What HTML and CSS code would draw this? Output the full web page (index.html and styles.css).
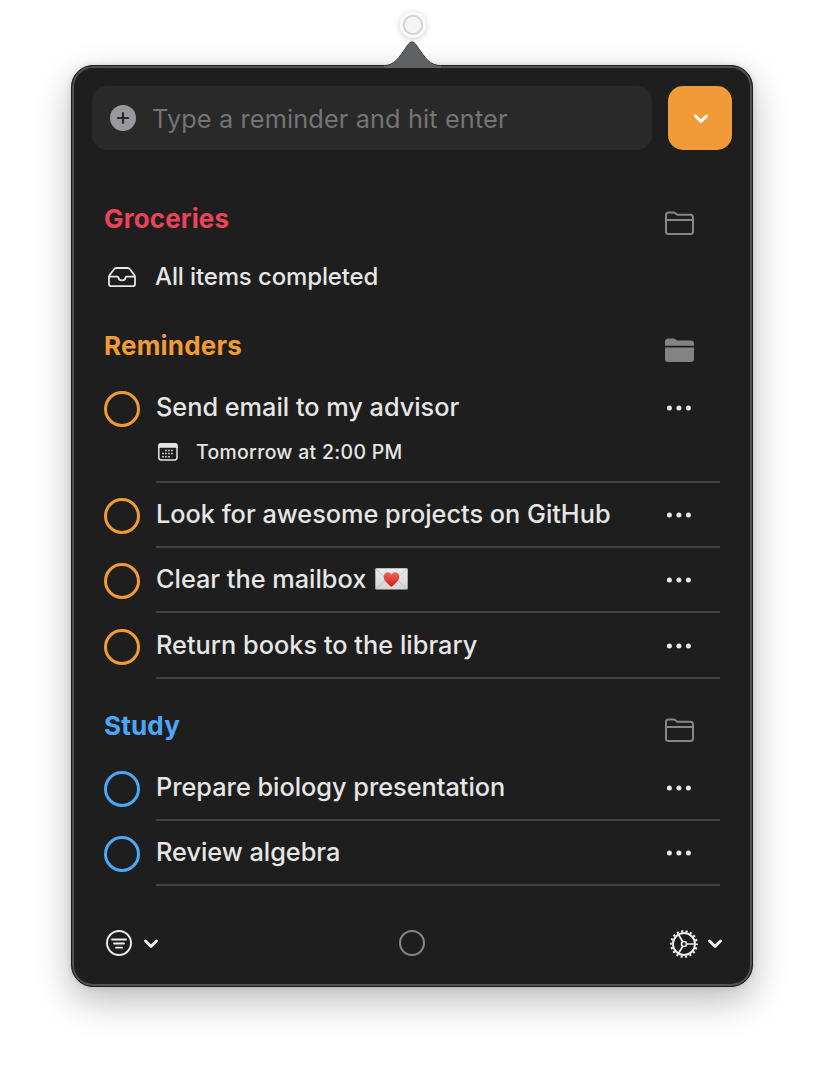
FILE: index.html
```
<!DOCTYPE html>
<html lang="en">
<head>
<meta charset="utf-8">
<title>Reminders</title>
<link rel="stylesheet" href="styles.css">
</head>
<body>
<svg width="0" height="0" class="defs">
  <symbol id="folder" viewBox="0 0 30 26"><path d="M1 21.7V5Q1 2.5 3.5 2.5H8.2Q9.5 2.5 10.3 3.3L11.2 4.1Q12 4.8 13 4.8H25.5Q28 4.8 28 7.3V21.5Q28 24 25.5 24H3.5Q1 24 1 21.7ZM1 10H28" fill="none" stroke="#878787" stroke-width="2"/></symbol>
  <symbol id="folder-fill" viewBox="0 0 30 26"><path d="M0 8.8V4.8Q0 1.4 3.4 1.4H8Q9.6 1.4 10.6 2.3L11.4 2.9Q12.2 3.6 13.4 3.6H25.8Q29 3.6 29 6.8V8.8ZM0 10.4H29V21.7Q29 25 25.8 25H3.2Q0 25 0 21.7Z" fill="#838383"/></symbol>
  <symbol id="dots" viewBox="0 0 26 6"><g fill="#e9e9e9"><circle cx="3.4" cy="3" r="2.5"/><circle cx="12.9" cy="3" r="2.5"/><circle cx="22.4" cy="3" r="2.5"/></g></symbol>
  <symbol id="chevron" viewBox="0 0 16 12"><path d="M2.5 3L8 8.4L13.5 3" fill="none" stroke="currentColor" stroke-width="2.9" stroke-linecap="round" stroke-linejoin="round"/></symbol>
</svg>

<main class="popover">
  <svg class="arrow" width="82" height="56" viewBox="0 0 82 56">
    <defs>
      <filter id="glow" x="-50%" y="-50%" width="200%" height="200%"><feDropShadow dx="0" dy="1" stdDeviation="3" flood-opacity=".22"/></filter>
    </defs>
    <circle cx="42" cy="14" r="12.8" fill="#fbfbfb" filter="url(#glow)"/>
    <circle cx="42" cy="14" r="9.2" fill="#f5f5f5" stroke="#d3d3d3" stroke-width="2"/>
    <path d="M13 57V54.6C23 54.6 28 48 36.5 34.5C39.5 29.8 42.5 29.8 45.5 34.5C54 48 59 54.6 70 54.6V57Z" fill="#606162"/>
    <path d="M13 54.6C23 54.6 28 47 36.5 34.3C39.5 29.8 42.5 29.8 45.5 34.3C54 47 59 54.6 70 54.6" fill="none" stroke="#333" stroke-width="1"/>
  </svg>

  <div class="compose">
    <div class="field">
      <svg width="26" height="26" viewBox="0 0 26 26"><circle cx="13" cy="13" r="13" fill="#98989d"/><path d="M13 8V18M8 13H18" stroke="#29292a" stroke-width="2.2" stroke-linecap="round"/></svg>
      <span class="placeholder">Type a reminder and hit enter</span>
    </div>
    <div class="pick"><svg width="16" height="12"><use href="#chevron"/></svg></div>
  </div>

  <section class="list red">
    <header><h2 class="t-groceries">Groceries</h2><svg width="30" height="26"><use href="#folder"/></svg></header>
    <div class="empty">
      <svg width="28" height="22" viewBox="0 0 28 22"><path d="M1 11V18Q1 20.2 3.2 20.2H24.8Q27 20.2 27 18V11Q27 10 26.3 9L22 3.3Q21.1 2 19.6 2H8.4Q6.9 2 6 3.3L1.7 9Q1 10 1 11ZM1.3 10.6H9.2Q10.4 10.6 10.4 11.6Q10.8 14.4 14 14.4Q17.2 14.4 17.6 11.6Q17.6 10.6 18.8 10.6H26.7" fill="none" stroke="#e6e6e6" stroke-width="1.8"/></svg>
      <span>All items completed</span>
    </div>
  </section>

  <section class="list orange">
    <header><h2>Reminders</h2><svg width="30" height="26"><use href="#folder-fill"/></svg></header>
    <div class="item dated"><i class="check"></i><div class="body">
      <div class="line"><span>Send email to my advisor</span><svg width="26" height="6"><use href="#dots"/></svg></div>
      <div class="date">
        <svg width="20" height="18" viewBox="0 0 20 18"><rect x=".8" y=".8" width="18.2" height="16.2" rx="2.4" fill="none" stroke="#e6e6e6" stroke-width="1.5"/><path d="M.4 4.8V3Q.4 .2 3 .2H17Q19.6 .2 19.6 3V4.8Z" fill="#e6e6e6"/><path d="M7.2 7.5H16M4.2 10.6H16M4.2 13.7H13" stroke="#e6e6e6" stroke-width="1.5" stroke-dasharray="1.5 1.5"/></svg>
        <span>Tomorrow at 2:00 PM</span>
      </div></div></div>
    <div class="item"><i class="check"></i><div class="body"><div class="line"><span>Look for awesome projects on GitHub</span><svg width="26" height="6"><use href="#dots"/></svg></div></div></div>
    <div class="item"><i class="check"></i><div class="body"><div class="line"><span>Clear the mailbox</span>
      <svg class="letter" width="33" height="22" viewBox="0 0 33 22"><defs><linearGradient id="paper" x2="0" y2="1"><stop stop-color="#ececec"/><stop offset="1" stop-color="#d4d4d4"/></linearGradient><linearGradient id="heart" x2="0" y2="1"><stop stop-color="#f4655c"/><stop offset="1" stop-color="#c9201f"/></linearGradient></defs><rect x=".3" y=".3" width="32.4" height="21.2" rx=".8" fill="url(#paper)"/><path d="M1 1L14 13Q16.5 15 19 13L32 1M1 21L12 11M32 21L21 11" fill="none" stroke="#b5b9b9" stroke-width=".8"/><path d="M16.5 18.8C12.5 15.8 8.7 12.3 8.7 8.7C8.7 3.8 14.4 2.8 16.5 6.6C18.6 2.8 24.3 3.8 24.3 8.7C24.3 12.3 20.5 15.8 16.5 18.8Z" fill="url(#heart)"/></svg>
      <svg width="26" height="6"><use href="#dots"/></svg></div></div></div>
    <div class="item tall"><i class="check"></i><div class="body"><div class="line"><span class="t-return">Return books to the library</span><svg width="26" height="6"><use href="#dots"/></svg></div></div></div>
  </section>

  <section class="list blue">
    <header><h2>Study</h2><svg width="30" height="26"><use href="#folder"/></svg></header>
    <div class="item"><i class="check"></i><div class="body"><div class="line"><span>Prepare biology presentation</span><svg width="26" height="6"><use href="#dots"/></svg></div></div></div>
    <div class="item"><i class="check"></i><div class="body"><div class="line"><span>Review algebra</span><svg width="26" height="6"><use href="#dots"/></svg></div></div></div>
  </section>

  <footer>
    <div class="tool filter">
      <svg width="26" height="26" viewBox="0 0 26 26" fill="none" stroke="#ececec" stroke-linecap="round"><circle cx="13" cy="13" r="12" stroke-width="1.9"/><path d="M6 9.5H20M8 13.5H18M10 17.7H16" stroke-width="1.8"/></svg>
      <svg width="16" height="12"><use href="#chevron"/></svg>
    </div>
    <svg width="26" height="26" viewBox="0 0 26 26"><circle cx="13" cy="13" r="12" fill="none" stroke="#868686" stroke-width="2"/></svg>
    <div class="tool settings">
      <svg width="28" height="28" viewBox="0 0 28 28" fill="none" stroke="#ececec"><circle cx="14" cy="14" r="12.8" stroke-width="2.2" stroke-dasharray="2.1 2.368" stroke-dashoffset="1.05"/><circle cx="14" cy="14" r="11" stroke-width="1.9"/><circle cx="14" cy="14" r="2.5" stroke-width="1.6"/><path d="M16.6 14H25M12.7 11.7L8.5 4.5M12.7 16.3L8.5 23.5" stroke-width="1.7"/></svg>
      <svg width="16" height="12"><use href="#chevron"/></svg>
    </div>
  </footer>
</main>
</body>
</html>
```
FILE: styles.css
```
* { box-sizing: border-box; }
body {
  margin: 0;
  height: 1066px;
  overflow: hidden;
  background: #fff;
  font-family: Inter, "Liberation Sans", sans-serif;
  color: #e6e6e6;
}
svg { display: block; flex: none; }
.defs { position: absolute; }

.popover {
  position: relative;
  width: 682px;
  height: 922px;
  margin: 65px 0 0 71px;
  padding: 20px;
  display: flex;
  flex-direction: column;
  border: 1px solid #1c1c1c;
  border-radius: 22px;
  background: #1e1e1e;
  box-shadow: inset 0 0 0 2px #505151, 0 14px 36px rgba(0, 0, 0, .27), 0 0 6px rgba(0, 0, 0, .12);
}
.arrow { position: absolute; left: 299px; top: -55px; overflow: visible; }

.compose { display: flex; gap: 16px; height: 64px; margin-bottom: 44px; }
.field {
  flex: 1;
  display: flex;
  align-items: center;
  gap: 16px;
  padding-left: 18px;
  border-radius: 15px;
  background: #292929;
}
.placeholder { font-size: 25.3px; letter-spacing: .13px; color: #747474; padding-top: 1px; }
.pick {
  width: 64px;
  display: flex;
  align-items: center;
  justify-content: center;
  padding: 2px 0 0 2px;
  border-radius: 15px;
  background: #f19a38;
  color: #fff;
}

.list { padding: 0 12px; }
.red { height: 127px; --tint: #eb445a; }
.orange { height: 380px; --tint: #f19a38; }
.blue { --tint: #4ca7f8; }
.list header { height: 55px; display: flex; justify-content: space-between; padding-right: 25px; }
.list header svg { margin-top: 16px; }
h2 { margin: 0; font-size: 26px; line-height: 50px; font-weight: 700; letter-spacing: .2px; color: var(--tint); }
.t-groceries { letter-spacing: .12px; }

.empty { height: 56px; display: flex; align-items: center; gap: 19px; padding-left: 4px; font-size: 24px; font-weight: 450; letter-spacing: -.13px; }
.empty span { margin-top: -2px; }

.item { height: 65px; display: flex; gap: 16px; }
.tall { height: 66px; padding-top: 1px; }
.dated { height: 107px; }
.check {
  width: 36px;
  height: 36px;
  margin-top: 15px;
  border: 3px solid var(--tint);
  border-radius: 50%;
}
.body { flex: 1; border-bottom: 2px solid #434343; }
.line { height: 62px; display: flex; align-items: center; padding-right: 28px; font-size: 25.3px; font-weight: 450; letter-spacing: -.01px; white-space: nowrap; }
.line span { margin-top: -2px; }
.line > svg:last-child { margin: 2px 0 0 auto; }
.t-return { letter-spacing: .03px; }
.letter { margin: 0 0 0 9px; }
.date { height: 28px; display: flex; align-items: center; gap: 18px; padding-left: 2px; font-size: 19.4px; font-weight: 500; letter-spacing: .33px; }

footer {
  display: flex;
  align-items: center;
  justify-content: space-between;
  height: 30px;
  margin-top: auto;
  padding: 0 9px 0 14px;
  margin-bottom: 8px;
}
.tool { display: flex; align-items: center; gap: 11px; color: #ececec; }
.filter { margin-right: -8px; }
.filter svg + svg { margin-top: 1px; }
.settings { gap: 9px; margin: 1px 0 0 -2px; }
```
